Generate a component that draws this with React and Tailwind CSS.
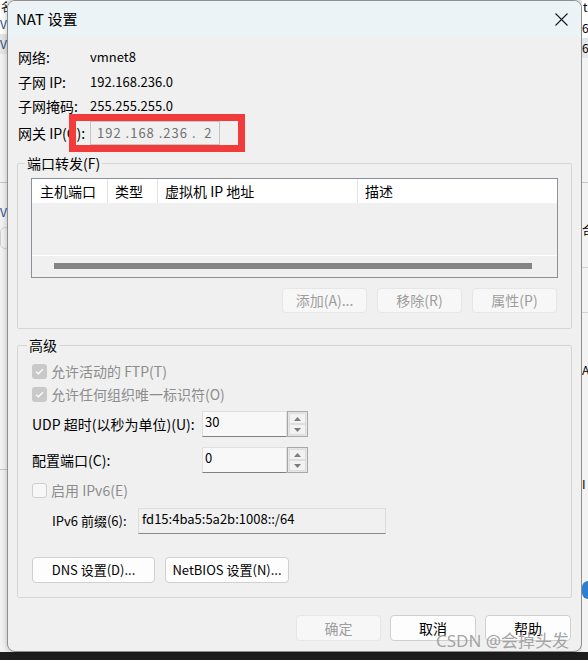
import React from "react";

const FONT = "font-['Noto_Sans_CJK_SC','Noto_Sans',sans-serif]";

const CloseIcon = () => (
  <svg width="13" height="13" viewBox="0 0 13 13">
    <path d="M0.5 0.5L12.5 12.5M12.5 0.5L0.5 12.5" stroke="#1b1b1b" strokeWidth="1.1" />
  </svg>
);

const CheckBox = ({ checked }) => {
  if (!checked) {
    return <div className="h-[15px] w-[15px] shrink-0 rounded-[3px] border border-[#cfcfcf] bg-[#f7f7f7]" />;
  }
  return (
    <div className="flex h-[15px] w-[15px] shrink-0 items-center justify-center rounded-[3px] bg-[#c9c9c9]">
      <svg width="9" height="7" viewBox="0 0 9 7">
        <path d="M1 3.6L3.3 5.8L8 1.2" fill="none" stroke="#ffffff" strokeWidth="1.2" />
      </svg>
    </div>
  );
};

const Spinner = () => (
  <div className="flex h-[26px] w-[21px] flex-col border border-[#a8a8a8] bg-[#e6e6e6] p-px">
    <div className="flex flex-1 items-center justify-center border border-[#dedede] bg-[#f2f2f2]">
      <svg width="7" height="4" viewBox="0 0 7 4">
        <path d="M3.5 0L7 4H0z" fill="#7c7c7c" />
      </svg>
    </div>
    <div className="flex flex-1 items-center justify-center border border-[#dedede] bg-[#f2f2f2]">
      <svg width="7" height="4" viewBox="0 0 7 4">
        <path d="M0 0H7L3.5 4z" fill="#7c7c7c" />
      </svg>
    </div>
  </div>
);

const InfoRow = ({ label, value, className = "" }) => (
  <div className={`flex h-6 items-center ${className}`}>
    <span className="w-[72px]">{label}</span>
    <span className="text-[13px]">{value}</span>
  </div>
);

const SpinRow = ({ label, value, className = "" }) => (
  <div className={`flex h-[26px] items-center ${className}`}>
    <span className="w-[170px]">{label}</span>
    <div className="h-[26px] w-[85px] border border-[#dfdfdf] border-b-[#808080] bg-[#f8f8f8] pl-[2px] text-[13px] leading-[20px]">
      {value}
    </div>
    <Spinner />
  </div>
);

const WinButton = ({ children, disabled, className = "" }) => (
  <div
    className={`flex items-center justify-center rounded-[4px] border ${
      disabled
        ? "border-[#e6e6e6] bg-[#f7f7f7] text-[#9d9d9d]"
        : "border-[#d0d0d0] bg-[#fdfdfd] text-black"
    } ${className}`}
  >
    {children}
  </div>
);

// bits of the window behind the dialog
const LeftStrip = () => (
  <div className="flex w-[7px] shrink-0 flex-col overflow-hidden bg-[#f3f3f3] text-[12px] leading-[14px]">
    <div className="h-[14px] bg-white pl-px text-[#222]">名</div>
    <div className="h-[20px] bg-white pt-[3px] text-[#1c4f8a]">V</div>
    <div className="h-[20px] bg-[#e6e6e6] pt-[3px] text-[#1c4f8a]">V</div>
    <div className="mt-[128px] h-px bg-[#c8c8c8]" />
    <div className="mt-[22px] h-[14px] text-[#1c4f8a]">V</div>
    <div className="mt-[8px] h-[22px] w-[10px] rounded-full border border-[#cfcfcf]" />
    <div className="mt-[220px] h-px bg-[#c8c8c8]" />
  </div>
);

const RightStrip = () => (
  <div className="flex flex-1 flex-col overflow-hidden bg-[#f3f3f3] text-[12px] leading-[14px]">
    <div className="h-[18px] bg-white pl-px">t</div>
    <div className="h-[20px] bg-white pt-[3px]">6</div>
    <div className="h-[20px] bg-[#e6e6e6] pt-[3px]">6</div>
    <div className="mt-[124px] h-px bg-[#c8c8c8]" />
    <div className="mt-[40px] h-[14px]">合</div>
    <div className="mt-[30px] h-px bg-[#d4d4d4]" />
    <div className="mt-[44px] h-px bg-[#d4d4d4]" />
    <div className="mt-[50px] h-[14px]">A</div>
    <div className="mt-[100px] h-[14px]">I</div>
    <div className="mt-[90px] h-[18px] w-[12px] rounded-full bg-[linear-gradient(90deg,#2f7fd1_50%,#f2c12e_50%)]" />
  </div>
);

export default function App() {
  return (
    <div className={`relative h-[660px] w-[588px] overflow-hidden bg-[#f3f3f3] text-[14px] text-black ${FONT}`}>
      <div className="flex h-[652px]">
        <LeftStrip />

        <div className="flex h-[652px] w-[575px] shrink-0 flex-col overflow-hidden rounded-lg border border-[#8e8e8e] bg-[#f0f0f0] shadow-[0_0_6px_rgba(0,0,0,0.25)]">
          {/* title bar */}
          <div className="flex h-[36px] shrink-0 items-center justify-between bg-[#ecf3f6] pl-[8px] pr-[13px]">
            <span className="text-[15px]">NAT 设置</span>
            <CloseIcon />
          </div>

          <div className="px-[9px] pt-[8px]">
            <div className="pl-px">
              <InfoRow label="网络:" value="vmnet8" />
              <InfoRow label="子网 IP:" value="192.168.236.0" className="mt-px" />
              <InfoRow label="子网掩码:" value="255.255.255.0" />
              <div className="relative mt-[3px] flex h-6 items-center">
                <span className="w-[72px]">网关 IP(G):</span>
                <div className="flex h-6 w-[130px] items-center whitespace-pre border border-[#c4c4c4] bg-[#f0f0f0] pl-[6px] text-[13px] tracking-[1px] text-[#707070]">
                  192 .168 .236 .  2
                </div>
                <div className="absolute left-[51px] top-[-7px] h-[38px] w-[176px] border-[7px] border-[#f23c3c]" />
              </div>
            </div>

            {/* 端口转发 */}
            <fieldset className="mt-[9px] rounded-[2px] border border-[#d6d6d6] pb-[15px]">
              <legend className="ml-[7px] px-[2px] leading-[18px]">端口转发(F)</legend>
              <div className="mx-[13px] mt-[6px] border border-[#8c9099] bg-[#f0f0f0]">
                <div className="flex h-6 bg-white">
                  <div className="flex w-[76px] items-center border-r border-[#e5e5e5] pl-[8px]">主机端口</div>
                  <div className="flex w-[50px] items-center border-r border-[#e5e5e5] pl-[7px]">类型</div>
                  <div className="flex w-[200px] items-center border-r border-[#e5e5e5] pl-[7px]">虚拟机 IP 地址</div>
                  <div className="flex flex-1 items-center pl-[7px]">描述</div>
                </div>
                <div className="h-[52px]" />
                <div className="h-px bg-white" />
                <div className="h-[21px] pl-[22px] pr-[25px] pt-[7px]">
                  <div className="h-[6px] bg-[#858585]" />
                </div>
              </div>
              <div className="mt-[10px] flex justify-end gap-[10px] pr-[14px]">
                <WinButton disabled className="h-[25px] w-[85px]">添加(A)...</WinButton>
                <WinButton disabled className="h-[25px] w-[85px]">移除(R)</WinButton>
                <WinButton disabled className="h-[25px] w-[85px]">属性(P)</WinButton>
              </div>
            </fieldset>

            {/* 高级 */}
            <fieldset className="mt-[7px] rounded-[2px] border border-[#d6d6d6] pb-[14px] pl-[14px]">
              <legend className="ml-[-5px] px-[2px] leading-[18px]">高级</legend>
              <div className="mt-[7px] flex h-5 items-center gap-[4px] text-[#8d8d8d]">
                <CheckBox checked />
                <span>允许活动的 FTP(T)</span>
              </div>
              <div className="mt-[3px] flex h-5 items-center gap-[4px] text-[#8d8d8d]">
                <CheckBox checked />
                <span>允许任何组织唯一标识符(O)</span>
              </div>
              <SpinRow label="UDP 超时(以秒为单位)(U):" value="30" className="mt-[7px]" />
              <SpinRow label="配置端口(C):" value="0" className="mt-[10px]" />
              <div className="mt-[7px] flex h-5 items-center gap-[4px] text-[#8d8d8d]">
                <CheckBox />
                <span>启用 IPv6(E)</span>
              </div>
              <div className="mt-[8px] flex h-[26px] items-center pl-[20px]">
                <span className="w-[86px] text-[13px]">IPv6 前缀(6):</span>
                <div className="h-[26px] w-[248px] border border-[#dcdcdc] border-b-[#8a8a8a] bg-[#f0f0f0] pl-[3px] text-[13px] leading-[20px]">
                  fd15:4ba5:5a2b:1008::/64
                </div>
              </div>
              <div className="mt-[23px] flex gap-[10px]">
                <WinButton className="h-[26px] w-[123px] text-[13px]">DNS 设置(D)...</WinButton>
                <WinButton className="h-[26px] w-[124px] text-[13px]">NetBIOS 设置(N)...</WinButton>
              </div>
            </fieldset>

            <div className="mt-[17px] flex justify-end gap-[9px] pr-px">
              <WinButton disabled className="h-[26px] w-[85px]">确定</WinButton>
              <WinButton className="h-[26px] w-[86px]">取消</WinButton>
              <WinButton className="h-[26px] w-[86px]">帮助</WinButton>
            </div>
          </div>
        </div>

        <RightStrip />
      </div>
      <div className="h-[8px] bg-[#1e1e1e]" />

      {/* watermark over the dialog */}
      <div className="absolute left-[436px] top-[630px] text-[17px] leading-[22px] text-[#9a9a9a]/90 font-['Noto_Sans','Noto_Sans_CJK_SC',sans-serif]">
        CSDN @会掉头发
      </div>
    </div>
  );
}
